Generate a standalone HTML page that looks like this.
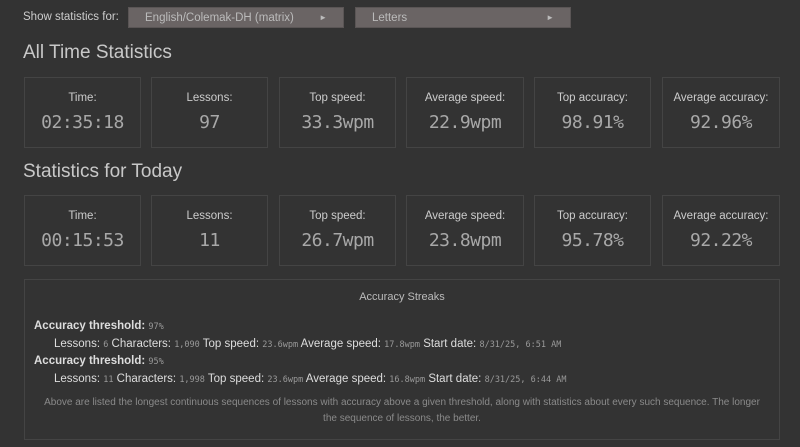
<!DOCTYPE html>
<html><head><style>
body{margin:0;width:800px;height:447px;background:#333;color:#ccc;font-family:"Liberation Sans",sans-serif;overflow:hidden;position:relative}
.abs{position:absolute}
.sel{position:absolute;top:7px;height:21px;background:#6a6464;border:1px solid #5a5555;box-sizing:border-box;color:#bbb;font-size:11.5px;line-height:20px;padding-left:16px}
.sel span{position:absolute;right:16px;font-size:8px}
h2{position:absolute;left:23px;margin:0;font-weight:normal;font-size:19px;color:#c8c8c8}
.box{position:absolute;width:117px;height:71px;border:1px solid #444;box-sizing:border-box;text-align:center}
.box .l{font-size:11.5px;color:#ccc;margin-top:14px}
.box .v{font-family:"DejaVu Sans Mono",monospace;font-size:18px;color:#a8a8a8;margin-top:8px;letter-spacing:-0.5px}
.m{font-family:"DejaVu Sans Mono",monospace;font-size:8.5px;color:#999}
</style></head><body>
<div class="abs" style="left:23px;top:11px;font-size:11.5px;color:#ccc">Show statistics for:</div>
<div class="sel" style="left:128px;width:216px">English/Colemak-DH (matrix)<span>►</span></div>
<div class="sel" style="left:355px;width:216px">Letters<span>►</span></div>
<h2 style="top:42px">All Time Statistics</h2>
<div class="box" style="left:24px;top:77px"><div class="l">Time:</div><div class="v">02:35:18</div></div>
<div class="box" style="left:151px;top:77px"><div class="l">Lessons:</div><div class="v">97</div></div>
<div class="box" style="left:279px;top:77px"><div class="l">Top speed:</div><div class="v">33.3wpm</div></div>
<div class="box" style="left:406px;top:77px;width:118px"><div class="l">Average speed:</div><div class="v">22.9wpm</div></div>
<div class="box" style="left:534px;top:77px"><div class="l">Top accuracy:</div><div class="v">98.91%</div></div>
<div class="box" style="left:662px;top:77px;width:118px"><div class="l">Average accuracy:</div><div class="v">92.96%</div></div>
<h2 style="top:161px">Statistics for Today</h2>
<div class="box" style="left:24px;top:195px"><div class="l">Time:</div><div class="v">00:15:53</div></div>
<div class="box" style="left:151px;top:195px"><div class="l">Lessons:</div><div class="v">11</div></div>
<div class="box" style="left:279px;top:195px"><div class="l">Top speed:</div><div class="v">26.7wpm</div></div>
<div class="box" style="left:406px;top:195px;width:118px"><div class="l">Average speed:</div><div class="v">23.8wpm</div></div>
<div class="box" style="left:534px;top:195px"><div class="l">Top accuracy:</div><div class="v">95.78%</div></div>
<div class="box" style="left:662px;top:195px;width:118px"><div class="l">Average accuracy:</div><div class="v">92.22%</div></div>
<div class="abs" style="left:24px;top:279px;width:756px;height:161px;border:1px solid #444;box-sizing:border-box;font-size:11.5px">
<div style="text-align:center;margin-top:11px;color:#bbb;font-size:11px">Accuracy Streaks</div>
<div style="position:absolute;left:9px;top:38px;line-height:16.5px;color:#ddd">
<div><b>Accuracy threshold:</b> <span class="m">97%</span></div>
<div style="padding-left:20px">Lessons: <span class="m">6</span> Characters: <span class="m">1,090</span> Top speed: <span class="m">23.6wpm</span> Average speed: <span class="m">17.8wpm</span> Start date: <span class="m">8/31/25, 6:51 AM</span></div>
<div><b>Accuracy threshold:</b> <span class="m">95%</span></div>
<div style="padding-left:20px">Lessons: <span class="m">11</span> Characters: <span class="m">1,998</span> Top speed: <span class="m">23.6wpm</span> Average speed: <span class="m">16.8wpm</span> Start date: <span class="m">8/31/25, 6:44 AM</span></div>
</div>
<div style="position:absolute;left:12px;right:12px;top:115px;text-align:center;color:#8a8a8a;font-size:10px;line-height:16px">Above are listed the longest continuous sequences of lessons with accuracy above a given threshold, along with statistics about every such sequence. The longer<br>the sequence of lessons, the better.</div>
</div>
</body></html>
